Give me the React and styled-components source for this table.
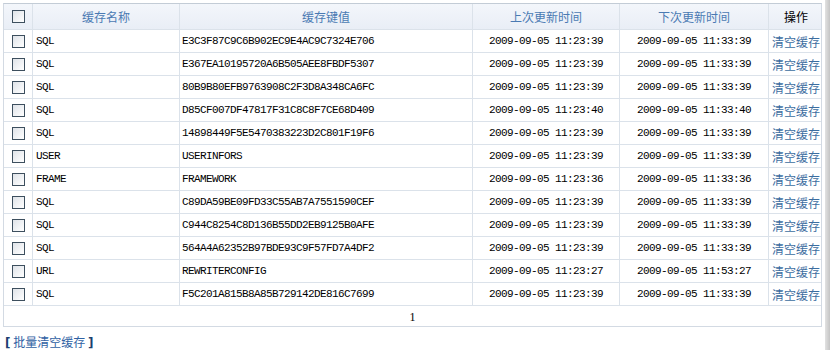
import React from 'react'
import styled, { createGlobalStyle } from 'styled-components'

const GlobalStyle = createGlobalStyle`
    html, body {
        margin: 0;
        padding: 0;
        background: #ffffff;
    }
`;

const rows = [
    ['SQL', 'E3C3F87C9C6B902EC9E4AC9C7324E706', '2009-09-05 11:23:39', '2009-09-05 11:33:39'],
    ['SQL', 'E367EA10195720A6B505AEE8FBDF5307', '2009-09-05 11:23:39', '2009-09-05 11:33:39'],
    ['SQL', '80B9B80EFB9763908C2F3D8A348CA6FC', '2009-09-05 11:23:39', '2009-09-05 11:33:39'],
    ['SQL', 'D85CF007DF47817F31C8C8F7CE68D409', '2009-09-05 11:23:40', '2009-09-05 11:33:40'],
    ['SQL', '14898449F5E5470383223D2C801F19F6', '2009-09-05 11:23:39', '2009-09-05 11:33:39'],
    ['USER', 'USERINFORS', '2009-09-05 11:23:39', '2009-09-05 11:33:39'],
    ['FRAME', 'FRAMEWORK', '2009-09-05 11:23:36', '2009-09-05 11:33:36'],
    ['SQL', 'C89DA59BE09FD33C55AB7A7551590CEF', '2009-09-05 11:23:39', '2009-09-05 11:33:39'],
    ['SQL', 'C944C8254C8D136B55DD2EB9125B0AFE', '2009-09-05 11:23:39', '2009-09-05 11:33:39'],
    ['SQL', '564A4A62352B97BDE93C9F57FD7A4DF2', '2009-09-05 11:23:39', '2009-09-05 11:33:39'],
    ['URL', 'REWRITERCONFIG', '2009-09-05 11:23:27', '2009-09-05 11:53:27'],
    ['SQL', 'F5C201A815B8A85B729142DE816C7699', '2009-09-05 11:23:39', '2009-09-05 11:33:39'],
]

const cols = '28px 147px 293px 147px 149px 55px'

const Page = styled.div`
    width: 830px;
    height: 350px;
    display: grid;
    grid-template-columns: 1fr 5px;
    grid-template-rows: 1fr 6px;
    overflow: hidden;
`;

const Content = styled.div`
    padding: 3px 0 0 3px;
    display: flex;
    flex-direction: column;
`;

const ShadowRight = styled.div`
    background: linear-gradient(to right, #e2e2e2, #c4c4c4);
`;

const ShadowBottom = styled.div`
    grid-column: 1 / span 2;
    background: #7c7c7c;
`;

const Table = styled.div`
    width: 819px;
    border: 1px solid #d3dae3;
    border-top-color: #c3ccd6;
    box-sizing: border-box;
`;

const Row = styled.div`
    display: grid;
    grid-template-columns: ${cols};
    height: ${p => p.$head ? 26 : 23}px;
    background: ${p => p.$head ? 'linear-gradient(#f3f6fb, #e9eef6)' : '#ffffff'};
    border-bottom: 1px solid #dbe2ea;
    box-sizing: border-box;
`;

const Cell = styled.div`
    display: flex;
    align-items: center;
    justify-content: ${p => p.$align || 'center'};
    padding-left: ${p => p.$pad || 0}px;
    border-left: ${p => p.$first ? 'none' : '1px solid #dbe2ea'};
    font-family: ${p => p.$mono ? '"Liberation Mono", "DejaVu Sans Mono", monospace' : '"Noto Sans CJK SC", sans-serif'};
    font-size: ${p => p.$mono ? '11px' : '12px'};
    letter-spacing: ${p => p.$mono ? '-0.6px' : '0'};
    color: ${p => p.$color || '#000000'};
    white-space: nowrap;
    overflow: hidden;
`;

const Box = styled.span`
    display: inline-block;
    width: 11px;
    height: 11px;
    border: 1px solid #3d4f5e;
    background: linear-gradient(135deg, #dfe3e8, #ffffff);
`;

const Pager = styled.div`
    height: 20px;
    padding-top: 3px;
    box-sizing: border-box;
    display: flex;
    align-items: center;
    justify-content: center;
    font-family: "Liberation Serif", serif;
    font-size: 12px;
    color: #000;
`;

const BatchLink = styled.div`
    margin-top: 8px;
    padding-left: 2px;
    font-family: "Noto Sans CJK SC", sans-serif;
    font-size: 12px;
    line-height: 14px;
    color: #2f61a3;
    b {
        color: #1c3f70;
        font-weight: 900;
        font-family: "DejaVu Sans", sans-serif;
    }
`;

const headBlue = '#4a7ab3'
const linkBlue = '#3c6d9f'

export default function App () {
    return (
        <Page>
            <GlobalStyle />
            <Content>
                <Table>
                    <Row $head>
                        <Cell $first><Box /></Cell>
                        <Cell $color={headBlue}>缓存名称</Cell>
                        <Cell $color={headBlue}>缓存键值</Cell>
                        <Cell $color={headBlue}>上次更新时间</Cell>
                        <Cell $color={headBlue}>下次更新时间</Cell>
                        <Cell>操作</Cell>
                    </Row>
                    {rows.map((r, i) => (
                        <Row key={i}>
                            <Cell $first><Box /></Cell>
                            <Cell $mono $align="flex-start" $pad={3}>{r[0]}</Cell>
                            <Cell $mono $align="flex-start" $pad={2}>{r[1]}</Cell>
                            <Cell $mono>{r[2]}</Cell>
                            <Cell $mono>{r[3]}</Cell>
                            <Cell $color={linkBlue}>清空缓存</Cell>
                        </Row>
                    ))}
                    <Pager>1</Pager>
                </Table>
                <BatchLink><b>[</b> 批量清空缓存 <b>]</b></BatchLink>
            </Content>
            <ShadowRight />
            <ShadowBottom />
        </Page>
    )
}
